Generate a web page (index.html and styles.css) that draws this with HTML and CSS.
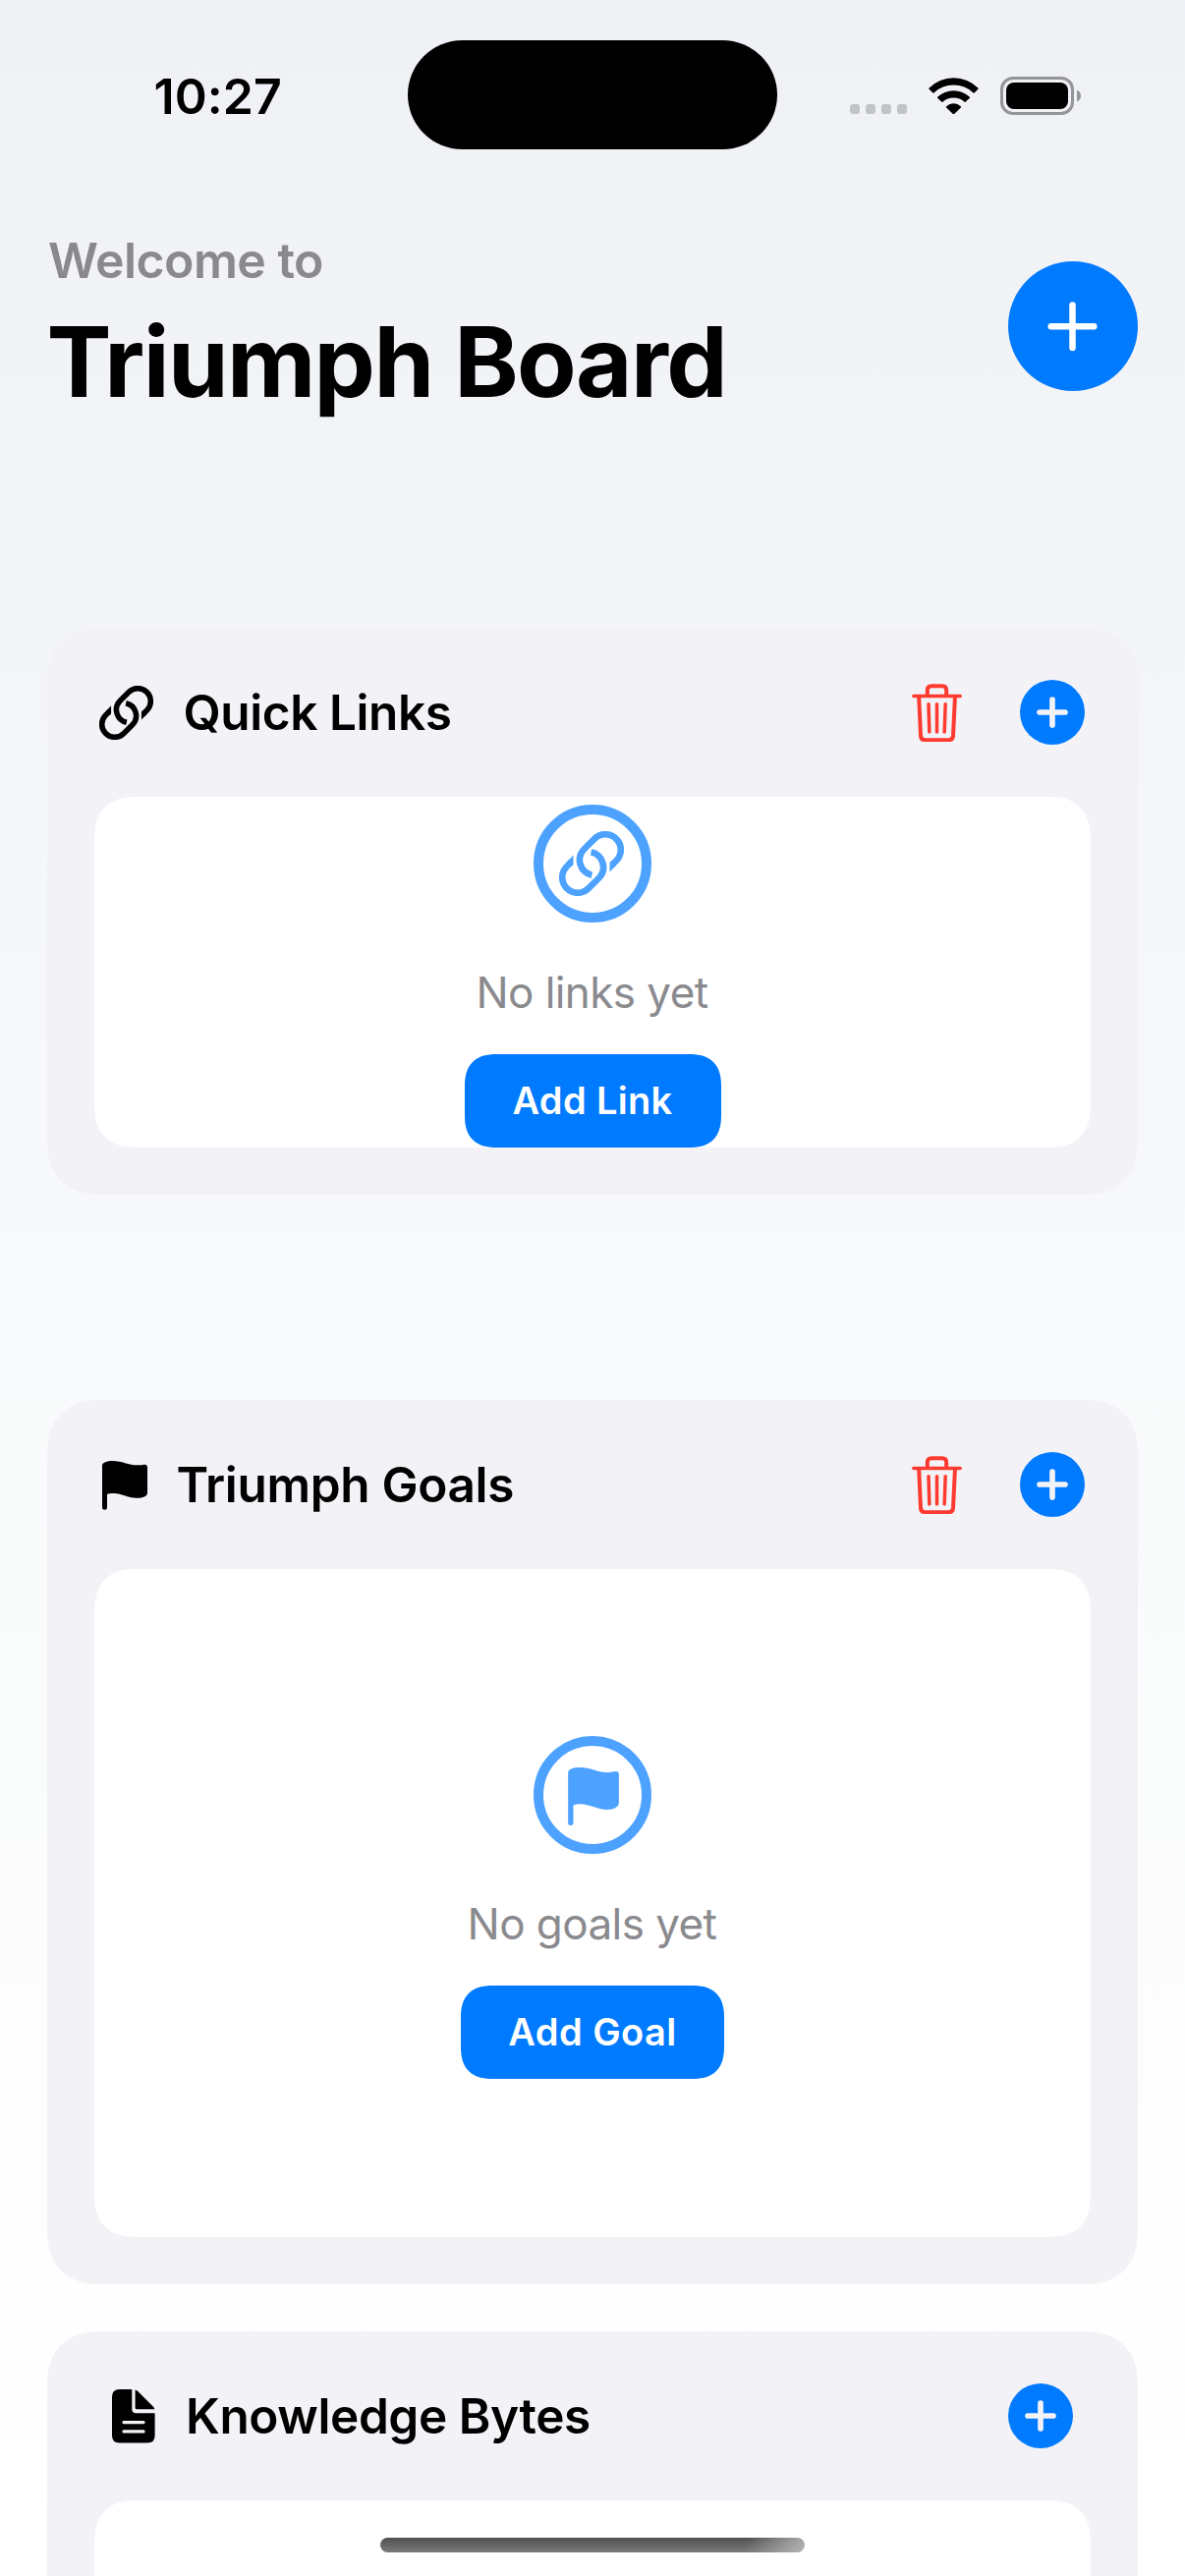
FILE: index.html
```
<!DOCTYPE html>
<html lang="en">
<head>
<meta charset="utf-8">
<title>Triumph Board</title>
<link rel="stylesheet" href="styles.css">
</head>
<body>
<svg class="sprite" aria-hidden="true">
  <defs>
    <clipPath id="cut-right"><rect x="128" y="40" width="40" height="80"/></clipPath>
    <clipPath id="cut-left"><rect x="-4" y="44" width="40" height="80"/></clipPath>
  </defs>
  <symbol id="link" viewBox="0 0 164 164">
    <g fill="none" stroke="currentColor" stroke-width="16.5">
      <path d="M134 85.200L144.600 74.600A39 39 0 0 0 89.400 19.400L63.400 45.400A39 39 0 0 0 83 111"/>
      <path d="M30 78.800L19.400 89.400A39 39 0 0 0 74.600 144.600L100.600 118.600A39 39 0 0 0 81 53"/>
      <path clip-path="url(#cut-right)" d="M138 81.200L110 109.200"/>
      <path clip-path="url(#cut-left)" d="M26 82.800L54 54.800"/>
    </g>
  </symbol>
  <symbol id="trash" viewBox="0 0 153 178">
    <g fill="none" stroke="currentColor" stroke-linecap="round" stroke-linejoin="round">
      <path stroke-width="11" d="M5.500 37.500H147.500"/>
      <path stroke-width="12" stroke-linecap="butt" d="M47.500 36V19Q47.500 6.500 60 6.500H93Q105.500 6.500 105.500 19V36"/>
      <path stroke-width="12" stroke-linecap="butt" d="M21.500 38L27 159Q28 171.500 40 171.500H113Q125 171.500 126 159L132 38"/>
      <path stroke-width="10.500" d="M51 62L53.500 147M76.500 62V147M102.500 62L99.500 147"/>
    </g>
  </symbol>
  <symbol id="plus-badge" viewBox="0 0 198 198">
    <circle cx="99" cy="99" r="99" fill="#007aff"/>
    <path d="M99 60V138M60 99H138" stroke="#f2f2f7" stroke-width="17" stroke-linecap="round"/>
  </symbol>
</svg>

<div class="status-bar">
  <span class="time">10:27</span>
  <span class="island"></span>
  <span class="indicators">
    <svg class="dots" viewBox="0 0 58 10" fill="#c2c3c6"><rect width="10" height="10" rx="3"/><rect x="16" width="10" height="10" rx="3"/><rect x="32" width="10" height="10" rx="3"/><rect x="48" width="10" height="10" rx="3"/></svg>
    <svg class="wifi" viewBox="0 0 152 112"><path d="M1 32A106 106 0 0 1 151 32Q151.500 33 151 34L139 46Q137.500 48 136 46A88 88 0 0 0 16 46Q14.500 48 13 46L1 34Q.5 33 1 32ZM27 59A71 71 0 0 1 125 59Q126 60.500 125 62L112 74Q110.500 75.500 109 74A50 50 0 0 0 43 74Q41.500 75.500 40 74L27 62Q26 60.500 27 59ZM54 87A33 33 0 0 1 98 87Q99.500 89 98 91L77.500 111Q76 112.500 74.500 111L54 91Q52.500 89 54 87Z"/></svg>
    <svg class="battery" viewBox="0 0 83 39"><rect x="1.500" y="1.500" width="72" height="36" rx="11.500" fill="none" stroke="#949598" stroke-width="3"/><rect x="6" y="6" width="63" height="27" rx="8"/><path d="M78 13.500Q82 15.500 82 19.500T78 25.500Z" fill="#949598"/></svg>
  </span>
</div>

<header class="header">
  <div>
    <p class="welcome">Welcome to</p>
    <h1 class="title">Triumph Board</h1>
  </div>
  <button class="add-main" aria-label="Add"><svg viewBox="0 0 132 132"><path d="M65.500 44.500V88M43.700 66.300H87.300" stroke="#fff" stroke-width="6.500" stroke-linecap="round"/></svg></button>
</header>

<main>
  <section class="card card-links">
    <div class="card-head">
      <svg class="icon-link"><use href="#link"/></svg>
      <h2 class="card-title links-title">Quick Links</h2>
      <svg class="icon-trash"><use href="#trash"/></svg>
      <svg class="icon-plus"><use href="#plus-badge"/></svg>
    </div>
    <div class="panel">
      <div class="ring"><svg class="ring-link"><use href="#link"/></svg></div>
      <p class="empty">No links yet</p>
      <button class="action action-link">Add Link</button>
    </div>
  </section>

  <section class="card card-goals">
    <div class="card-head">
      <svg class="icon-flag" viewBox="0 0 138 150"><path d="M0 14C0 6 14 0 32 0C62 0 78 13 110 13C122 13 125 11 131 11C135 11 138 14 138 20V98C138 107 124 113 106 113C76 113 60 99 36 99C24 99 20 100 15 102V142A7.500 7.500 0 0 1 0 142Z"/></svg>
      <h2 class="card-title goals-title">Triumph Goals</h2>
      <svg class="icon-trash"><use href="#trash"/></svg>
      <svg class="icon-plus"><use href="#plus-badge"/></svg>
    </div>
    <div class="panel">
      <div class="ring"><svg class="ring-flag" viewBox="0 0 155 177"><path fill="currentColor" d="M0 16C0 6 14 0 36 0C70 0 88 15 118 15C134 15 140 12 147 12C152 12 155 15 155 21V108C155 119 142 129 119 129C88 129 66 112 37 112C26 112 20 114 16 116V169A8 8 0 0 1 0 169Z"/></svg></div>
      <p class="empty">No goals yet</p>
      <button class="action action-goal">Add Goal</button>
    </div>
  </section>

  <section class="card card-bytes">
    <div class="card-head">
      <svg class="icon-doc" viewBox="0 0 43.600 54.600"><path d="M7.600 0H20.300V20Q20.300 24.300 24.500 24.300H43.600V47Q43.600 54.600 36 54.600H7.600Q0 54.600 0 47V7.600Q0 0 7.600 0Z"/><path d="M23.600 .4Q25 .8 26 1.800L41.800 17.500Q43 18.800 43.400 20.200H25Q23.600 20.200 23.600 18.800Z"/><path d="M12 33.600H32M12 42.900H32" stroke="#f2f2f7" stroke-width="3.300" stroke-linecap="round"/></svg>
      <h2 class="card-title bytes-title">Knowledge Bytes</h2>
      <svg class="icon-plus"><use href="#plus-badge"/></svg>
    </div>
    <div class="panel"></div>
  </section>
</main>
<div class="home-indicator"></div>
</body>
</html>
```
FILE: styles.css
```
* { box-sizing: border-box; margin: 0; }

html { height: 2622px; overflow: hidden; }

body {
  height: 2622px;
  overflow: hidden;
  padding: 0 48px;
  background: linear-gradient(#f0f1f6, #f3f5f7 25%, #f8fafb 54%, #fefefe 88%, #fff);
  color: #000;
  font-family: Inter, "Liberation Sans", sans-serif;
}

svg { display: block; flex: none; }
button { border: 0; padding: 0; font: inherit; }
.sprite { position: absolute; width: 0; height: 0; }

.status-bar {
  height: 235px;
  display: grid;
  grid-template-columns: 367px 376px 367px;
  align-items: start;
}
.time {
  padding: 68px 0 0 108.500px;
  font-size: 50px;
  font-weight: 600;
  line-height: 60px;
  letter-spacing: 0.1px;
}
.island {
  height: 111px;
  margin-top: 41px;
  border-radius: 56px;
  background: #000;
}
.indicators {
  display: flex;
  padding: 78px 0 0 74px;
}
.dots { width: 58px; height: 10px; margin-top: 28px; }
.wifi { width: 51px; height: 37.500px; margin: 0.700px 0 0 22px; }
.battery { width: 83px; height: 39px; margin-left: 22px; }

.header {
  height: 194px;
  display: flex;
  justify-content: space-between;
  align-items: center;
}
.welcome {
  margin-left: 1px;
  color: #8a8a8e;
  font-size: 50px;
  font-weight: 600;
  line-height: 60px;
  letter-spacing: -0.560px;
}
.title {
  margin: 12px 0 0 -0.500px;
  font-size: 99px;
  font-weight: 700;
  line-height: 122px;
  letter-spacing: -1.640px;
}
.add-main {
  width: 132px;
  height: 132px;
  border-radius: 50%;
  background: #007aff;
}

.card {
  padding: 0 48px 48px;
  border-radius: 58px;
  corner-shape: superellipse(1.320);
  background: #f2f2f7;
}
.card-links { height: 576px; margin-top: 211px; }
.card-goals { height: 900px; margin-top: 209px; }
.card-bytes {
  height: 249px;
  margin-top: 48px;
  padding-bottom: 0;
  border-radius: 58px 58px 0 0;
}

.card-head {
  height: 172px;
  display: flex;
  align-items: center;
}
.card-links .card-head { height: 171px; padding-bottom: 1px; }
.card-links .card-head, .card-goals .card-head { padding-right: 6px; }
.card-bytes .card-head { padding-right: 18px; }

.card-title {
  flex: 1;
  font-size: 49.500px;
  font-weight: 600;
  line-height: 60px;
  white-space: nowrap;
}
.links-title { margin-left: 30.500px; letter-spacing: -0.420px; }
.goals-title { margin-left: 29.500px; letter-spacing: -0.320px; }
.bytes-title { margin-left: 31.500px; letter-spacing: -0.410px; }

.icon-link { width: 55px; height: 55px; margin-left: 5px; }
.icon-flag { width: 46px; height: 50px; margin: 2px 0 0 8px; }
.icon-doc { width: 43.600px; height: 54.600px; margin: 1px 0 0 18px; }
.icon-trash { width: 51px; height: 59.300px; margin: 1px 59px 0 0; color: #ff3b30; }
.icon-plus { width: 66px; height: 66px; }

.panel {
  display: flex;
  flex-direction: column;
  align-items: center;
  justify-content: center;
  padding-top: 8px;
  border-radius: 44px;
  corner-shape: superellipse(1.320);
  background: #fff;
}
.card-links .panel { height: 357px; }
.card-goals .panel { height: 680px; padding-top: 9px; }
.card-bytes .panel { height: 77px; border-radius: 44px 44px 0 0; }

.ring {
  width: 120px;
  height: 120px;
  display: flex;
  align-items: center;
  justify-content: center;
  border: 10px solid #4da2ff;
  border-radius: 50%;
  color: #4da2ff;
}
.ring-link { width: 66px; height: 66px; margin-left: -2px; }
.ring-flag { width: 52px; height: 59px; margin: 3px 0 0 1px; }

.empty {
  margin: 44px 0 36px -1px;
  color: #8a8a8e;
  font-size: 44px;
  line-height: 54px;
  letter-spacing: -0.560px;
}
.action {
  height: 95px;
  padding-bottom: 2px;
  border-radius: 33px;
  corner-shape: superellipse(1.320);
  background: #007aff;
  color: #fff;
  font-size: 38px;
  font-weight: 600;
}
.action-link { width: 261px; letter-spacing: 0.350px; }
.action-goal { width: 268px; letter-spacing: 0.450px; }

.home-indicator {
  position: fixed;
  left: 387px;
  bottom: 24px;
  width: 432px;
  height: 15px;
  border-radius: 8px;
  background:
    linear-gradient(100deg, transparent 86%, rgba(190, 190, 190, 0.850) 100%),
    linear-gradient(#505050, #7a7a7a);
}
```
